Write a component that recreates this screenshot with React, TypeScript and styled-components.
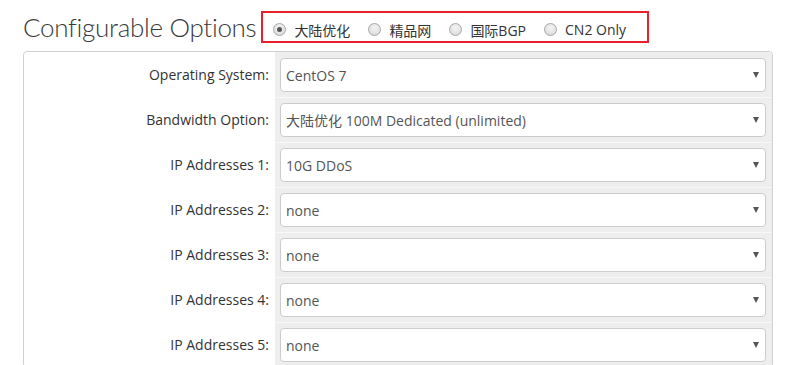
import React from 'react';
import styled, { createGlobalStyle } from 'styled-components';

const GlobalStyle = createGlobalStyle`
  html, body {
    margin: 0;
    padding: 0;
    background: #fff;
    overflow: hidden;
  }
  body {
    font-family: "Open Sans", "Noto Sans CJK SC", sans-serif;
    color: #333;
  }
`;

const Page = styled.div`
  width: 750px;
  padding: 11px 0 0 23px;
`;

const Header = styled.div`
  display: flex;
  align-items: center;
  gap: 5px;
  margin-bottom: 8px;
`;

const Title = styled.h3`
  margin: 0;
  font-family: "Lato", sans-serif;
  font-weight: 300;
  font-size: 26px;
  letter-spacing: -0.3px;
  color: #3a3a3a;
  line-height: 32px;
  white-space: nowrap;
`;

const NetworkBox = styled.div`
  display: flex;
  align-items: center;
  flex-shrink: 0;
  height: 23px;
  padding: 5px 0 0 10px;
  width: 374px;
  border: 2px solid #e8202a;
`;

const RadioItem = styled.label`
  display: flex;
  align-items: center;
  flex-shrink: 0;
  white-space: nowrap;
  font-size: 14px;
  color: #333;
  margin-right: 18px;
  font-family: "Open Sans", "Noto Sans CJK SC", sans-serif;
`;

const RadioDot = styled.span<{ $checked?: boolean }>`
  width: 11px;
  height: 11px;
  border-radius: 50%;
  border: 1px solid #a8a8a8;
  background: radial-gradient(circle at 50% 35%, #f4f4f4, #d6d6d6);
  margin-right: 8px;
  display: flex;
  align-items: center;
  justify-content: center;

  &::after {
    content: "";
    width: 5px;
    height: 5px;
    border-radius: 50%;
    background: ${({ $checked }) => ($checked ? '#555' : 'transparent')};
  }
`;

const Panel = styled.div`
  border: 1px solid #d0d0d0;
  border-radius: 4px;
  overflow: hidden;
`;

const Row = styled.div`
  display: grid;
  grid-template-columns: 251px 1fr;
`;

const Label = styled.div`
  display: flex;
  align-items: center;
  justify-content: flex-end;
  padding-right: 6px;
  font-size: 14px;
  color: #333;
`;

const Field = styled.div<{ $first?: boolean }>`
  background: #eeeeee;
  border-top: 1px solid ${({ $first }) => ($first ? '#eeeeee' : '#f8f8f8')};
  padding: 5px 6px 5px 5px;
`;

const Select = styled.div`
  height: 32px;
  border: 1px solid #cccccc;
  border-radius: 4px;
  background: #fff;
  display: flex;
  align-items: center;
  justify-content: space-between;
  padding: 0 6px 0 5px;
  font-size: 14px;
  color: #555;
  font-family: "Open Sans", "Noto Sans CJK SC", sans-serif;
`;

const Arrow = styled.span`
  width: 0;
  height: 0;
  border-left: 3.5px solid transparent;
  border-right: 3.5px solid transparent;
  border-top: 6px solid #555;
`;

const networks = [
  { name: '大陆优化', checked: true },
  { name: '精品网' },
  { name: '国际BGP' },
  { name: 'CN2 Only' },
];

const options = [
  { label: 'Operating System:', value: 'CentOS 7' },
  { label: 'Bandwidth Option:', value: '大陆优化 100M Dedicated (unlimited)' },
  { label: 'IP Addresses 1:', value: '10G DDoS' },
  { label: 'IP Addresses 2:', value: 'none' },
  { label: 'IP Addresses 3:', value: 'none' },
  { label: 'IP Addresses 4:', value: 'none' },
  { label: 'IP Addresses 5:', value: 'none' },
];

const App: React.FC = () => {
  return (
    <Page>
      <GlobalStyle />
      <Header>
        <Title>Configurable Options</Title>
        <NetworkBox>
          {networks.map((n) => (
            <RadioItem key={n.name}>
              <RadioDot $checked={n.checked} />
              {n.name}
            </RadioItem>
          ))}
        </NetworkBox>
      </Header>
      <Panel>
        {options.map((o, i) => (
          <Row key={o.label}>
            <Label>{o.label}</Label>
            <Field $first={i === 0}>
              <Select>
                <span>{o.value}</span>
                <Arrow />
              </Select>
            </Field>
          </Row>
        ))}
      </Panel>
    </Page>
  );
};

export default App;
